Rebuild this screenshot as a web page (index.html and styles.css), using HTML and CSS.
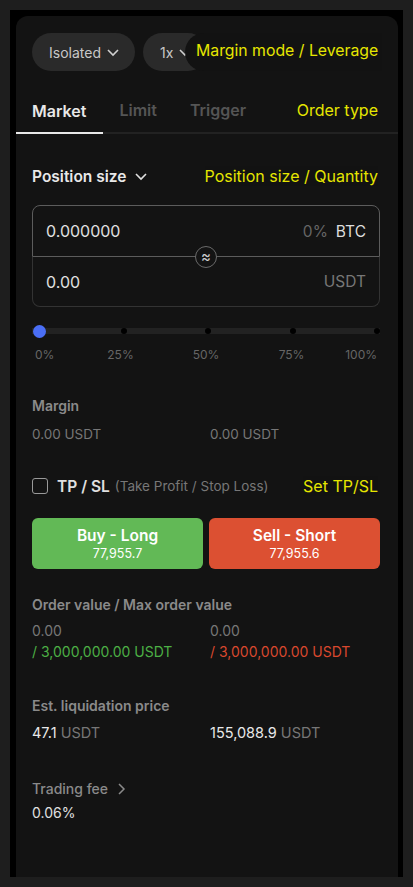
FILE: index.html
```html
<!DOCTYPE html>
<html lang="en">
<head>
  <meta charset="UTF-8">
  <title>Order Panel</title>
  <link rel="stylesheet" href="styles.css">
</head>
<body>
  <div class="frame">
    <div class="panel">
      <div class="mode-row">
        <button class="pill">Isolated
          <svg width="14" height="14" viewBox="0 0 14 14"><polyline points="2,5 7,10 12,5" fill="none" stroke="#d0d0d0" stroke-width="1.6"/></svg>
        </button>
        <button class="pill">1x
          <svg width="14" height="14" viewBox="0 0 14 14"><polyline points="2,5 7,10 12,5" fill="none" stroke="#d0d0d0" stroke-width="1.6"/></svg>
        </button>
        <span class="note note-mode">Margin mode / Leverage</span>
      </div>

      <div class="tabs">
        <span class="tab active">Market</span>
        <span class="tab">Limit</span>
        <span class="tab">Trigger</span>
        <span class="note">Order type</span>
      </div>

      <div class="content">
        <div class="size-head">
          <span class="size-title">Position size
            <svg width="16" height="16" viewBox="0 0 16 16"><polyline points="3,6 8,11 13,6" fill="none" stroke="#e0e0e0" stroke-width="1.6"/></svg>
          </span>
          <span class="note">Position size / Quantity</span>
        </div>

        <div class="qty-box">
          <div class="qty-row qty-top">
            <span class="qty-val">0.000000</span>
            <span class="qty-unit"><span class="pct">0%</span>BTC</span>
          </div>
          <div class="qty-row qty-bottom">
            <span class="qty-val">0.00</span>
            <span class="qty-unit dim">USDT</span>
          </div>
          <span class="swap">≈</span>
        </div>

        <div class="slider">
          <span class="stop"><i class="knob"></i></span>
          <span class="stop"><i class="dot"></i></span>
          <span class="stop"><i class="dot"></i></span>
          <span class="stop"><i class="dot"></i></span>
          <span class="stop"><i class="dot"></i></span>
        </div>
        <div class="ticks">
          <span class="tick first">0%</span>
          <span class="tick">25%</span>
          <span class="tick">50%</span>
          <span class="tick">75%</span>
          <span class="tick last">100%</span>
        </div>

        <div class="label margin-label">Margin</div>
        <div class="cols values dim">
          <span>0.00 USDT</span>
          <span>0.00 USDT</span>
        </div>

        <div class="tpsl">
          <span class="check"></span>
          <span class="tpsl-title">TP / SL</span>
          <span class="tpsl-sub">(Take Profit / Stop Loss)</span>
          <span class="note">Set TP/SL</span>
        </div>

        <div class="actions">
          <button class="trade buy"><b>Buy - Long</b><span>77,955.7</span></button>
          <button class="trade sell"><b>Sell - Short</b><span>77,955.6</span></button>
        </div>

        <div class="label order-label">Order value / Max order value</div>
        <div class="cols order-values">
          <div><span class="dim">0.00</span><br><span class="green">/ 3,000,000.00 USDT</span></div>
          <div><span class="dim">0.00</span><br><span class="red">/ 3,000,000.00 USDT</span></div>
        </div>

        <div class="label liq-label">Est. liquidation price</div>
        <div class="cols values liq-values">
          <span>47.1 <em>USDT</em></span>
          <span>155,088.9 <em>USDT</em></span>
        </div>

        <div class="label fee-label">Trading fee
          <svg width="14" height="14" viewBox="0 0 14 14"><polyline points="5,2 10,7 5,12" fill="none" stroke="#8a8a8a" stroke-width="1.5"/></svg>
        </div>
        <div class="fee-value">0.06%</div>
      </div>
    </div>
  </div>
</body>
</html>
```

FILE: styles.css
```css
body {
  margin: 0;
  padding: 10px;
  background-color: #1e1e1e;
  font-family: Inter, "Noto Sans", sans-serif;
  color: #e0e0e0;
  height: 887px;
  box-sizing: border-box;
}
.frame {
  background-color: #000;
  padding: 6px 5px 0 6px;
  height: 867px;
  box-sizing: border-box;
}
.panel {
  background-color: #131313;
  border-radius: 12px 12px 0 0;
  height: 100%;
  padding-top: 17px;
  box-sizing: border-box;
}
.note {
  color: #e6e600;
  font-size: 16px;
  background-color: #121212;
  margin-left: auto;
  margin-right: 2px;
  white-space: nowrap;
}
.mode-row {
  position: relative;
  display: flex;
  gap: 8px;
  padding: 0 18px 0 16px;
}
.pill {
  display: flex;
  align-items: center;
  gap: 5px;
  height: 38px;
  padding: 0 15px 0 17px;
  border: none;
  border-radius: 19px;
  background-color: #2a2a2a;
  color: #c8c8c8;
  font-family: inherit;
  font-size: 14px;
}
.note-mode {
  position: absolute;
  left: 169px;
  top: 0;
  height: 38px;
  line-height: 36px;
  padding: 0 4px 0 11px;
  font-size: 15.8px;
  border-radius: 19px 0 0 19px;
}
.tabs {
  display: flex;
  align-items: center;
  height: 46px;
  margin-top: 17px;
  padding: 0 18px 0 0;
  border-bottom: 2px solid #222;
  box-sizing: border-box;
}
.tab {
  display: flex;
  align-items: center;
  height: 46px;
  font-size: 16px;
  font-weight: 600;
  color: #555;
  box-sizing: border-box;
}
.tab.active {
  padding: 2px 17px 0 16px;
  color: #e8e8e8;
  border-bottom: 2px solid #e8e8e8;
  margin-bottom: -2px;
}
.tab:nth-child(2) {
  margin-left: 16px;
}
.tab:nth-child(3) {
  margin-left: 33px;
}
.content {
  padding: 0 18px 0 16px;
}
.size-head {
  display: flex;
  align-items: center;
  height: 20px;
  margin-top: 32px;
}
.size-title {
  display: flex;
  align-items: center;
  gap: 7px;
  font-size: 15.5px;
  font-weight: 600;
  color: #e8e8e8;
}
.qty-box {
  position: relative;
  margin-top: 19px;
}
.qty-row {
  display: flex;
  justify-content: space-between;
  align-items: center;
  padding: 0 13px;
  font-size: 16px;
  box-sizing: border-box;
}
.qty-top {
  height: 52px;
  border: 1px solid #5c5c5c;
  border-radius: 8px 8px 0 0;
}
.qty-bottom {
  height: 50px;
  border: 1px solid #333;
  border-top: none;
  border-radius: 0 0 8px 8px;
}
.qty-val {
  color: #e0e0e0;
}
.qty-unit {
  font-size: 15.5px;
  color: #ddd;
}
.pct {
  color: #666;
  margin-right: 8px;
}
.dim {
  color: #777;
}
.swap {
  position: absolute;
  left: 163px;
  top: 41px;
  width: 20px;
  height: 20px;
  border: 1.5px solid #6a6a6a;
  border-radius: 50%;
  background-color: #131313;
  color: #ccc;
  font-size: 15px;
  line-height: 19px;
  text-align: center;
}
.slider {
  display: flex;
  justify-content: space-between;
  align-items: center;
  height: 14px;
  margin-top: 17px;
  padding: 0 3px 0 7px;
  background: linear-gradient(#222, #222) no-repeat center / 100% 6px;
}
.ticks {
  display: flex;
  justify-content: space-between;
  margin-top: 9px;
  padding: 0 3px 0 7px;
  font-size: 12px;
  line-height: 16px;
  color: #666;
}
.stop,
.tick {
  display: flex;
  justify-content: center;
  width: 0;
  white-space: nowrap;
}
.tick.first {
  justify-content: flex-start;
  margin-left: -4px;
}
.tick.last {
  justify-content: flex-end;
}
.knob {
  flex: none;
  width: 13px;
  height: 13px;
  border-radius: 50%;
  background-color: #4a6ef5;
}
.dot {
  flex: none;
  width: 6px;
  height: 6px;
  border-radius: 50%;
  background-color: #000;
}
.label {
  font-size: 14px;
  font-weight: 600;
  color: #8a8a8a;
  line-height: 18px;
}
.margin-label {
  margin-top: 34px;
}
.cols {
  display: grid;
  grid-template-columns: 178px 1fr;
  font-size: 13.5px;
}
.values {
  margin-top: 10px;
  line-height: 18px;
}
.tpsl {
  display: flex;
  align-items: center;
  height: 20px;
  margin-top: 33px;
}
.check {
  width: 14px;
  height: 14px;
  border: 1.5px solid #999;
  border-radius: 3px;
  margin-right: 9px;
}
.tpsl-title {
  font-size: 15.5px;
  font-weight: 600;
  color: #e0e0e0;
  margin-right: 5px;
}
.tpsl-sub {
  font-size: 13.5px;
  color: #777;
}
.actions {
  display: flex;
  gap: 6px;
  margin-top: 22px;
}
.trade {
  flex: 1;
  display: flex;
  flex-direction: column;
  align-items: center;
  justify-content: center;
  height: 51px;
  border: none;
  border-radius: 6px;
  color: #fff;
  font-family: inherit;
}
.trade b {
  font-size: 15.5px;
  font-weight: 600;
  line-height: 20px;
}
.trade span {
  font-size: 12.5px;
  line-height: 15px;
}
.buy {
  background-color: #62b956;
}
.sell {
  background-color: #dc5032;
}
.order-label {
  margin-top: 27px;
}
.order-values {
  margin-top: 6px;
  line-height: 21px;
  font-size: 14px;
}
.green {
  color: #4caf45;
}
.red {
  color: #d9482e;
}
.liq-label {
  margin-top: 35px;
}
.liq-values {
  margin-top: 9px;
  font-size: 14.5px;
  color: #e8e8e8;
}
.liq-values em {
  font-style: normal;
  color: #777;
}
.fee-label {
  display: flex;
  align-items: center;
  gap: 6px;
  margin-top: 38px;
  font-weight: 500;
}
.fee-value {
  margin-top: 6px;
  font-size: 14px;
  line-height: 18px;
  color: #e0e0e0;
}
```
